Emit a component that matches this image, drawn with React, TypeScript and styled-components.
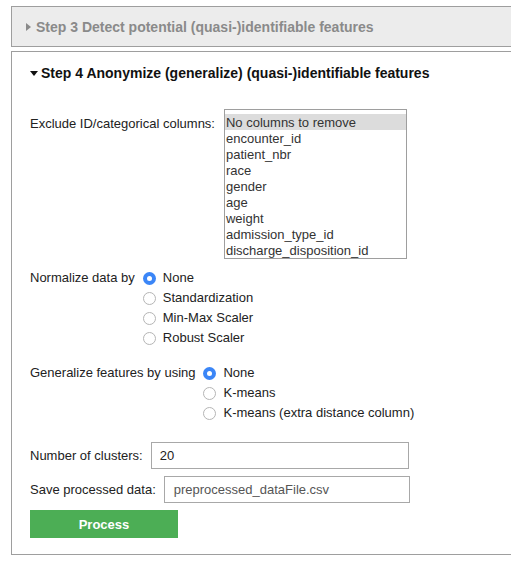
import React from "react";
import styled, { createGlobalStyle } from "styled-components";

const Global = createGlobalStyle`
  html, body { margin: 0; padding: 0; overflow: hidden; background: #fff; }
  body { font-family: "Liberation Sans", Arial, sans-serif; font-size: 13px; color: #222; }
`;

const Page = styled.div`
  padding: 6px 0 0 11px;
  width: 520px;
  display: flex;
  flex-direction: column;
  gap: 4px;
`;

const Panel = styled.section<{ $collapsed?: boolean }>`
  border: 1px solid #9e9e9e;
  background: ${(p) => (p.$collapsed ? "#ececec" : "#fff")};
`;

const Header = styled.div<{ $collapsed?: boolean }>`
  display: flex;
  align-items: center;
  gap: ${(p) => (p.$collapsed ? "5px" : "3px")};
  padding: ${(p) => (p.$collapsed ? "12px 0 11px 14px" : "13px 0 0 18px")};
  font-size: 14px;
  line-height: 16px;
  font-weight: bold;
  color: ${(p) => (p.$collapsed ? "#8a8a8a" : "#111")};
`;

const CaretRight = styled.span`
  width: 0;
  height: 0;
  border-top: 4px solid transparent;
  border-bottom: 4px solid transparent;
  border-left: 5px solid #8a8a8a;
`;

const CaretDown = styled.span`
  width: 0;
  height: 0;
  margin-top: 1px;
  border-left: 4px solid transparent;
  border-right: 4px solid transparent;
  border-top: 5px solid #111;
`;

const Body = styled.div`
  padding: 28px 18px 16px 18px;
  display: flex;
  flex-direction: column;
`;

const ListRow = styled.div`
  display: flex;
  align-items: flex-start;
  gap: 9px;
`;

const ListLabel = styled.span`
  margin-top: 7px;
  line-height: 16px;
`;

const ListBox = styled.div`
  width: 181px;
  border: 1px solid #9e9e9e;
  padding-top: 4px;
  display: flex;
  flex-direction: column;
`;

const ListItem = styled.div<{ $selected?: boolean }>`
  line-height: 18px;
  height: 16px;
  padding-left: 1px;
  color: #333;
  white-space: nowrap;
  overflow: hidden;
  background: ${(p) => (p.$selected ? "#dcdcdc" : "transparent")};
`;

const RadioGroupRow = styled.div<{ $mt: number }>`
  display: flex;
  align-items: flex-start;
  gap: 8px;
  margin-top: ${(p) => p.$mt}px;
`;

const GroupLabel = styled.span`
  line-height: 20px;
`;

const Options = styled.div`
  display: flex;
  flex-direction: column;
`;

const Option = styled.label`
  display: flex;
  align-items: center;
  gap: 7px;
  height: 20px;
  line-height: 20px;
`;

const Radio = styled.span<{ $checked?: boolean }>`
  width: 13px;
  height: 13px;
  box-sizing: border-box;
  border-radius: 50%;
  border: ${(p) => (p.$checked ? "none" : "1px solid #b5b5b5")};
  background: ${(p) => (p.$checked ? "#3b86f7" : "#fff")};
  display: flex;
  align-items: center;
  justify-content: center;
  &::after {
    content: "";
    width: 5px;
    height: 5px;
    border-radius: 50%;
    background: #fff;
    display: ${(p) => (p.$checked ? "block" : "none")};
  }
`;

const FieldRow = styled.div<{ $mt: number }>`
  display: flex;
  align-items: center;
  gap: 8px;
  margin-top: ${(p) => p.$mt}px;
`;

const Input = styled.div<{ $muted?: boolean; $w: number }>`
  width: ${(p) => p.$w}px;
  height: 27px;
  box-sizing: border-box;
  border: 1px solid #a8a8a8;
  padding-left: ${(p) => (p.$muted ? "9px" : "8px")};
  display: flex;
  align-items: center;
  color: ${(p) => (p.$muted ? "#555" : "#222")};
`;

const Button = styled.button`
  margin-top: 7px;
  width: 148px;
  height: 28px;
  border: none;
  background: #4cae55;
  color: #fff;
  font-family: "Liberation Sans", Arial, sans-serif;
  font-weight: bold;
  font-size: 13px;
  padding: 0;
`;

const columns = [
  "No columns to remove",
  "encounter_id",
  "patient_nbr",
  "race",
  "gender",
  "age",
  "weight",
  "admission_type_id",
  "discharge_disposition_id",
];

const normalize = ["None", "Standardization", "Min-Max Scaler", "Robust Scaler"];
const generalize = ["None", "K-means", "K-means (extra distance column)"];

export default function App() {
  return (
    <>
      <Global />
      <Page>
        <Panel $collapsed>
          <Header $collapsed>
            <CaretRight />
            Step 3 Detect potential (quasi-)identifiable features
          </Header>
        </Panel>
        <Panel>
          <Header>
            <CaretDown />
            Step 4 Anonymize (generalize) (quasi-)identifiable features
          </Header>
          <Body>
            <ListRow>
              <ListLabel>Exclude ID/categorical columns:</ListLabel>
              <ListBox>
                {columns.map((c, i) => (
                  <ListItem key={c} $selected={i === 0}>
                    {c}
                  </ListItem>
                ))}
              </ListBox>
            </ListRow>
            <RadioGroupRow $mt={9}>
              <GroupLabel>Normalize data by</GroupLabel>
              <Options>
                {normalize.map((o, i) => (
                  <Option key={o}>
                    <Radio $checked={i === 0} />
                    {o}
                  </Option>
                ))}
              </Options>
            </RadioGroupRow>
            <RadioGroupRow $mt={15}>
              <GroupLabel>Generalize features by using</GroupLabel>
              <Options>
                {generalize.map((o, i) => (
                  <Option key={o}>
                    <Radio $checked={i === 0} />
                    {o}
                  </Option>
                ))}
              </Options>
            </RadioGroupRow>
            <FieldRow $mt={19}>
              <span>Number of clusters:</span>
              <Input $w={258}>20</Input>
            </FieldRow>
            <FieldRow $mt={7}>
              <span>Save processed data:</span>
              <Input $w={246} $muted>
                preprocessed_dataFile.csv
              </Input>
            </FieldRow>
            <Button>Process</Button>
          </Body>
        </Panel>
      </Page>
    </>
  );
}
